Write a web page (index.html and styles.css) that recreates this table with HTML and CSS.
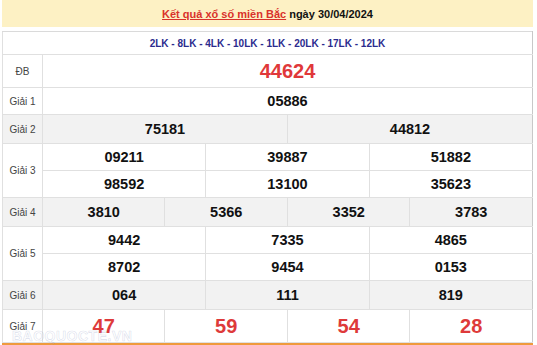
FILE: index.html
```html
<!DOCTYPE html>
<html lang="vi">
<head>
<meta charset="utf-8">
<link rel="stylesheet" href="styles.css">
</head>
<body>
<div class="box">
  <div class="title"><a class="link">Kết quả xổ số miền Bắc</a> ngày 30/04/2024</div>
  <table class="kq">
    <colgroup>
      <col class="c-label">
      <col><col><col><col><col><col><col><col><col><col><col><col>
    </colgroup>
    <tr class="r-lk"><td colspan="13" class="lk">2LK - 8LK - 4LK - 10LK - 1LK - 20LK - 17LK - 12LK</td></tr>
    <tr class="r-db"><td class="lbl">ĐB</td><td colspan="12" class="big">44624</td></tr>
    <tr class="r"><td class="lbl">Giải 1</td><td colspan="12" class="num">05886</td></tr>
    <tr class="r alt"><td class="lbl">Giải 2</td><td colspan="6" class="num">75181</td><td colspan="6" class="num">44812</td></tr>
    <tr class="r"><td class="lbl" rowspan="2">Giải 3</td><td colspan="4" class="num">09211</td><td colspan="4" class="num">39887</td><td colspan="4" class="num">51882</td></tr>
    <tr class="r"><td colspan="4" class="num">98592</td><td colspan="4" class="num">13100</td><td colspan="4" class="num">35623</td></tr>
    <tr class="r alt"><td class="lbl">Giải 4</td><td colspan="3" class="num">3810</td><td colspan="3" class="num">5366</td><td colspan="3" class="num">3352</td><td colspan="3" class="num">3783</td></tr>
    <tr class="r"><td class="lbl" rowspan="2">Giải 5</td><td colspan="4" class="num">9442</td><td colspan="4" class="num">7335</td><td colspan="4" class="num">4865</td></tr>
    <tr class="r"><td colspan="4" class="num">8702</td><td colspan="4" class="num">9454</td><td colspan="4" class="num">0153</td></tr>
    <tr class="r alt"><td class="lbl">Giải 6</td><td colspan="4" class="num">064</td><td colspan="4" class="num">111</td><td colspan="4" class="num">819</td></tr>
    <tr class="r-g7"><td class="lbl">Giải 7</td><td colspan="3" class="red">47</td><td colspan="3" class="red">59</td><td colspan="3" class="red">54</td><td colspan="3" class="red">28</td></tr>
  </table>
  <div class="wm">BAOQUOCTE.VN</div>
  <div class="bar"></div>
</div>
</body>
</html>
```

FILE: styles.css
```css
html, body {
  margin: 0;
  padding: 0;
  background: #fff;
}
body {
  font-family: "Liberation Sans", Arial, sans-serif;
}
.box {
  position: relative;
  width: 531px;
  margin-left: 2px;
}
.title {
  height: 27px;
  background: #fdf1c4;
  text-align: center;
  font-size: 11px;
  font-weight: bold;
  line-height: 28px;
  color: #111;
  margin-bottom: 4px;
}
.link {
  color: #d9322b;
  text-decoration: underline;
}
.kq {
  width: 531px;
  border-collapse: collapse;
  table-layout: fixed;
}
.c-label {
  width: 40px;
}
.kq td {
  border: 1px solid #e0e0e0;
  text-align: center;
  padding: 0;
}
.kq tr > td:last-child {
  border-right-color: #c8c8c8;
}
.r-lk td {
  border-top-color: #dadada;
}
.lk {
  height: 22px;
  font-size: 10px;
  font-weight: bold;
  color: #2b2b8e;
}
.r-db td {
  height: 32px;
}
.r td {
  height: 26px;
}
.alt td {
  background: #f2f2f2;
  height: 28px;
}
.r-g7 td {
  height: 32px;
}
.lbl {
  font-size: 10px;
  color: #444;
}
.num {
  font-size: 14.5px;
  font-weight: bold;
  color: #111;
}
.big {
  font-size: 20px;
  font-weight: bold;
  color: #e0383a;
}
.red {
  font-size: 20px;
  font-weight: bold;
  color: #de3a3a;
}
.wm {
  position: absolute;
  left: 10px;
  bottom: 3px;
  font-size: 14px;
  line-height: 14px;
  font-weight: bold;
  letter-spacing: 0.5px;
  color: transparent;
  -webkit-text-stroke: 0.6px rgba(150, 160, 200, 0.35);
  pointer-events: none;
}
.bar {
  height: 3px;
  background: #ef9a3c;
}
```
